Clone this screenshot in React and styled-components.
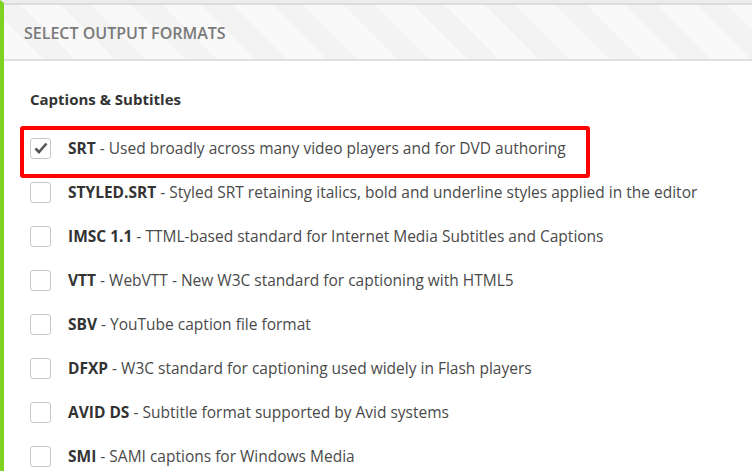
import styled, { createGlobalStyle } from "styled-components"

const GlobalStyle = createGlobalStyle`
    body {
        margin: 0;
        background: #ffffff;
        font-family: 'Open Sans', 'Liberation Sans', sans-serif;
    }
`

const formats = [
    { name: "SRT", desc: "Used broadly across many video players and for DVD authoring", checked: true },
    { name: "STYLED.SRT", desc: "Styled SRT retaining italics, bold and underline styles applied in the editor" },
    { name: "IMSC 1.1", desc: "TTML-based standard for Internet Media Subtitles and Captions" },
    { name: "VTT", desc: "WebVTT - New W3C standard for captioning with HTML5" },
    { name: "SBV", desc: "YouTube caption file format" },
    { name: "DFXP", desc: "W3C standard for captioning used widely in Flash players" },
    { name: "AVID DS", desc: "Subtitle format supported by Avid systems" },
    { name: "SMI", desc: "SAMI captions for Windows Media" },
]

export default function App() {
    return (
        <>
        <GlobalStyle />
        <Panel>
            <Header>Select output formats</Header>
            <Body>
                <SectionTitle>Captions &amp; Subtitles</SectionTitle>
                <List>
                    {formats.map((f) => (
                        <Row key={f.name} highlighted={f.checked}>
                            <Box>
                                {f.checked && (
                                    <svg width="14" height="12" viewBox="0 0 14 12">
                                        <path d="M1.5 6.5 L5 10 L12.5 1.5" fill="none" stroke="#555" strokeWidth="2.6" />
                                    </svg>
                                )}
                            </Box>
                            <Label><b>{f.name}</b> - {f.desc}</Label>
                        </Row>
                    ))}
                </List>
            </Body>
        </Panel>
        </>
    )
}

const Panel = styled.div`
    height: 471px;
    overflow: hidden;
    border-left: 4px solid #7ed321;
    border-top: 3px solid #ececec;
`
const Header = styled.div`
    height: 58px;
    box-sizing: border-box;
    border-top: 2px solid #dcdcdc;
    border-bottom: 2px solid #e0e0e0;
    padding-left: 20px;
    padding-top: 2px;
    display: flex;
    align-items: center;
    text-transform: uppercase;
    font-size: 16px;
    font-weight: 600;
    color: #7a7a7a;
    background: repeating-linear-gradient(
        45deg,
        #f9f9f9 0px,
        #f9f9f9 28px,
        #f3f3f3 28px,
        #f3f3f3 50px
    );
`
const Body = styled.div`
    padding: 28px 0 0 26px;
`
const SectionTitle = styled.div`
    font-size: 15px;
    font-weight: 700;
    color: #333;
    line-height: 20px;
    margin-bottom: 17px;
`
const List = styled.div`
    display: flex;
    flex-direction: column;
`
const Row = styled.label`
    position: relative;
    height: 44px;
    display: flex;
    align-items: center;
    gap: 17px;
    &::after {
        content: "";
        display: ${(p) => (p.highlighted ? "block" : "none")};
        position: absolute;
        left: -10px;
        top: 0;
        width: 570px;
        height: 52px;
        box-sizing: border-box;
        border: 4px solid #ff0000;
        border-radius: 3px;
    }
`
const Box = styled.span`
    width: 21px;
    height: 21px;
    box-sizing: border-box;
    border: 1px solid #c8c8c8;
    border-radius: 3px;
    background: #fff;
    display: flex;
    align-items: center;
    justify-content: center;
    flex-shrink: 0;
`
const Label = styled.span`
    font-size: 15.5px;
    color: #4a4a4a;
    white-space: nowrap;
    b {
        font-weight: 700;
        color: #333;
    }
`
